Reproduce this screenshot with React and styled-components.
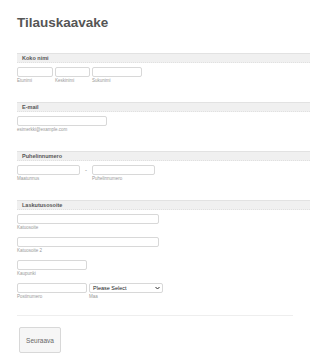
import React from "react";
import styled, { createGlobalStyle } from "styled-components";

const Global = createGlobalStyle`
  html, body {
    margin: 0;
    padding: 0;
    background: #fff;
    font-family: "Liberation Sans", Arial, sans-serif;
  }
`;

const Page = styled.div`
  width: 310px;
  height: 354px;
  overflow: hidden;
  padding-left: 17px;
  box-sizing: border-box;
`;

const Title = styled.h1`
  margin: 0;
  padding-top: 15px;
  height: 53px;
  box-sizing: border-box;
  font-size: 13.5px;
  line-height: 16px;
  font-weight: bold;
  color: #555;
`;

const Section = styled.div`
  display: flex;
  flex-direction: column;
  margin-bottom: 18px;
`;

const Bar = styled.div`
  height: 10px;
  box-sizing: border-box;
  background: #f0f0f0;
  border-top: 1px solid #e2e2e2;
  border-bottom: 1px dotted #e0e0e0;
  padding-left: 5px;
  font-size: 5.5px;
  line-height: 8px;
  font-weight: bold;
  color: #555;
  margin-bottom: 4px;
`;

const Fields = styled.div`
  display: flex;
  flex-direction: column;
  gap: 6px;
`;

const Row = styled.div`
  display: flex;
  align-items: flex-start;
  gap: ${(p) => p.$gap || 3}px;
`;

const Field = styled.div`
  display: flex;
  flex-direction: column;
  width: ${(p) => p.$w}px;
`;

const Input = styled.div`
  height: 10px;
  box-sizing: border-box;
  border: 1px solid #d8d8d8;
  border-radius: 2px;
  background: #fff;
`;

const Select = styled.div`
  height: 10px;
  box-sizing: border-box;
  border: 1px solid #d8d8d8;
  border-radius: 2px;
  background: #fff;
  display: flex;
  align-items: center;
  justify-content: space-between;
  padding: 0 2px 0 3px;
  font-size: 5.5px;
  color: #222;
`;

const Sub = styled.div`
  margin-top: 1px;
  font-size: 4.5px;
  line-height: 6px;
  color: #999;
  white-space: nowrap;
`;

const Dash = styled.div`
  width: 6px;
  text-align: center;
  font-size: 6px;
  line-height: 10px;
  color: #777;
`;

const Divider = styled.div`
  height: 1px;
  width: 276px;
  background: #eee;
  margin-top: -3px;
`;

const Button = styled.div`
  margin-top: 11px;
  margin-left: 2px;
  width: 42px;
  height: 26px;
  box-sizing: border-box;
  border: 1px solid #d8d8d8;
  border-radius: 2px;
  background: #f6f6f6;
  display: flex;
  align-items: center;
  justify-content: center;
  font-size: 6.5px;
  color: #666;
`;

const Chevron = () => (
  <svg width="5" height="4" viewBox="0 0 5 4">
    <path d="M0.5 1 L2.5 3 L4.5 1" fill="none" stroke="#333" strokeWidth="1" />
  </svg>
);

export default function App() {
  return (
    <Page>
      <Global />
      <Title>Tilauskaavake</Title>

      <Section>
        <Bar>Koko nimi</Bar>
        <Row $gap={2}>
          <Field $w={36}>
            <Input />
            <Sub>Etunimi</Sub>
          </Field>
          <Field $w={35}>
            <Input />
            <Sub>Keskinimi</Sub>
          </Field>
          <Field $w={50}>
            <Input />
            <Sub>Sukunimi</Sub>
          </Field>
        </Row>
      </Section>

      <Section>
        <Bar>E-mail</Bar>
        <Field $w={90}>
          <Input />
          <Sub>esimerkki@example.com</Sub>
        </Field>
      </Section>

      <Section>
        <Bar>Puhelinnumero</Bar>
        <Row $gap={0}>
          <Field $w={63}>
            <Input />
            <Sub>Maatunnus</Sub>
          </Field>
          <Dash>-</Dash>
          <Field $w={63}>
            <Input />
            <Sub>Puhelinnumero</Sub>
          </Field>
        </Row>
      </Section>

      <Section>
        <Bar>Laskutusosoite</Bar>
        <Fields>
          <Field $w={142}>
            <Input />
            <Sub>Katuosoite</Sub>
          </Field>
          <Field $w={142}>
            <Input />
            <Sub>Katuosoite 2</Sub>
          </Field>
          <Field $w={70}>
            <Input />
            <Sub>Kaupunki</Sub>
          </Field>
          <Row $gap={2}>
            <Field $w={70}>
              <Input />
              <Sub>Postinumero</Sub>
            </Field>
            <Field $w={74}>
              <Select>
                <span>Please Select</span>
                <Chevron />
              </Select>
              <Sub>Maa</Sub>
            </Field>
          </Row>
        </Fields>
      </Section>

      <Divider />
      <Button>Seuraava</Button>
    </Page>
  );
}
